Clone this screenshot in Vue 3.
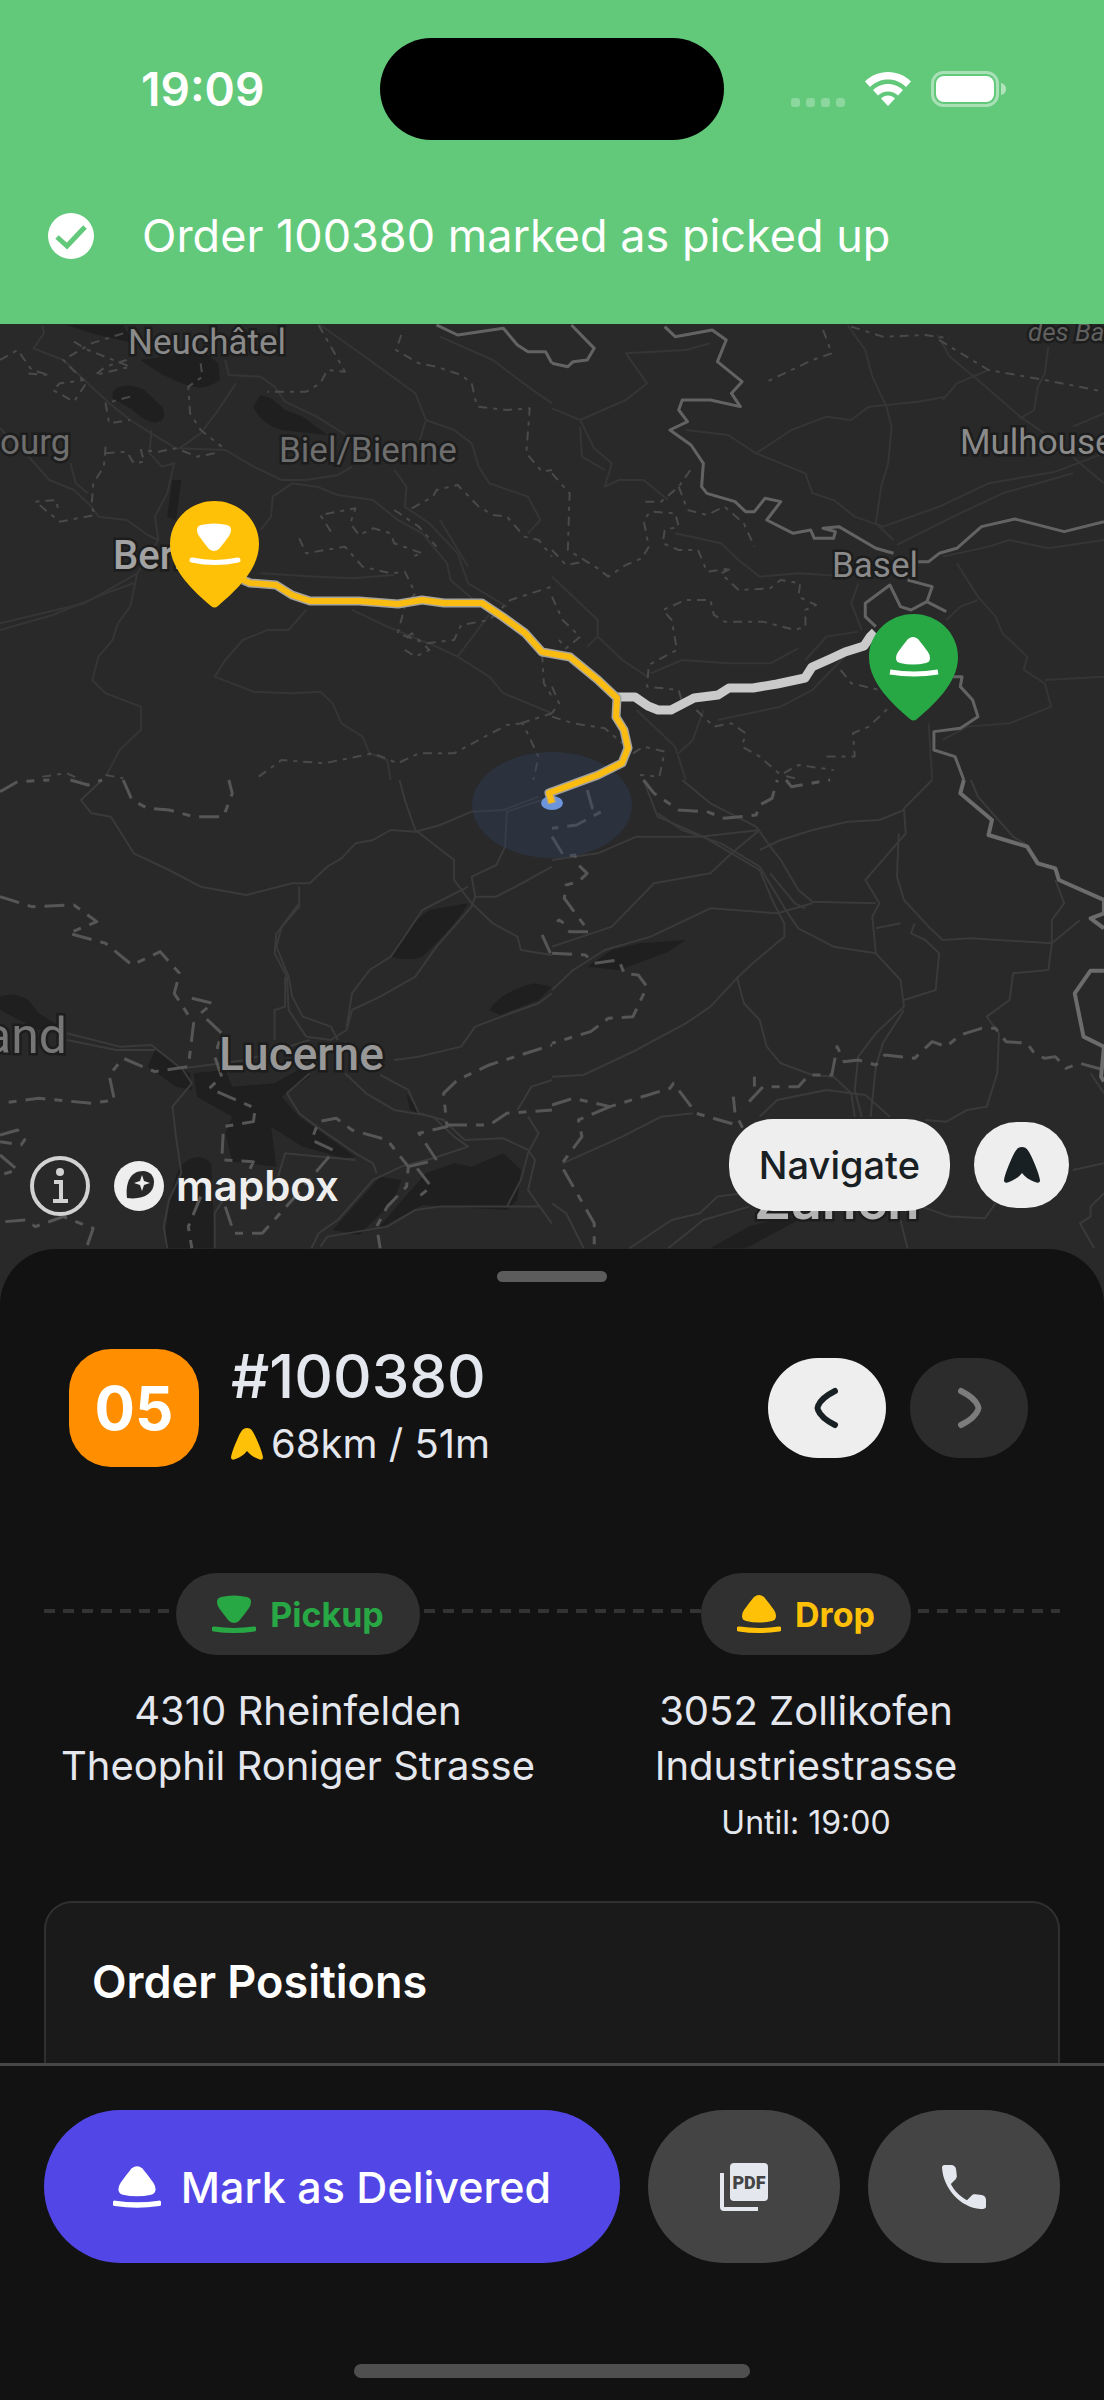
<template>
  <div class="page">
    <!-- status bar + toast -->
    <header class="top">
      <div class="status-bar">
        <span class="clock">19:09</span>
        <div class="island"></div>
        <div class="status-icons">
          <div class="signal">
            <i v-for="n in 4" :key="n"></i>
          </div>
          <svg class="wifi" viewBox="0 0 46 34">
            <path d="M23 0C14 0 6 3.500 0 9.500L5 15C10 10 16 7.500 23 7.500S36 10 41 15L46 9.500C40 3.500 32 0 23 0Z" />
            <path d="M23 12C17 12 12 14.500 8 18L13 23.500C16 21 19 19.500 23 19.500S30 21 33 23.500L38 18C34 14.500 29 12 23 12Z" />
            <path d="M23 23.500C20.500 23.500 18 24.500 16 26.500L23 34L30 26.500C28 24.500 25.500 23.500 23 23.500Z" />
          </svg>
          <svg class="battery" viewBox="0 0 75 36">
            <rect x="1.500" y="1.500" width="65" height="33" rx="11" fill="none" stroke="#fff" stroke-opacity=".45" stroke-width="3" />
            <rect x="5" y="5" width="58" height="26" rx="8" fill="#fff" />
            <path d="M70 12C74 13 75 16 75 18S74 23 70 24Z" fill="#fff" fill-opacity=".5" />
          </svg>
        </div>
      </div>
      <div class="toast" role="status">
        <svg class="toast-icon" viewBox="0 0 46 46">
          <circle cx="23" cy="23" r="23" fill="#fff" />
          <path d="M9 24L19 33L37 14" fill="none" stroke="#62c97b" stroke-width="5" />
        </svg>
        <span>Order 100380 marked as picked up</span>
      </div>
    </header>

    <!-- map -->
    <section class="map">
      <svg class="map-canvas" viewBox="0 324 1104 981" preserveAspectRatio="xMidYMin slice">
        <g v-for="tile in tiles" :key="tile.id" :class="{ near: tile.y > 700 }" :transform="`translate(${tile.x} ${tile.y}) scale(.352 .3333)`">
          <path v-for="(d, i) in tile.water" :key="'w' + i" class="water" :d="d" />
          <path v-for="(d, i) in tile.roads" :key="'r' + i" class="road" :d="d" />
          <path v-for="(d, i) in tile.cantons" :key="'c' + i" class="canton" :d="d" />
          <path v-for="(d, i) in tile.borders" :key="'b' + i" class="border" :d="d" />
        </g>

        <g class="labels">
          <text v-for="label in labels" :key="label.text" :x="label.x" :y="label.y" :class="label.kind">{{ label.text }}</text>
        </g>

        <ellipse cx="552" cy="805" rx="80" ry="53" fill="#2e4364" fill-opacity=".36" />
        <ellipse cx="552" cy="803" rx="11" ry="7" fill="#6d95dc" />

        <path class="route-alt" :d="pickupRoute" />
        <path class="route-casing" :d="dropRoute" />
        <path class="route" :d="dropRoute" />

        <g transform="translate(170 501)">
          <path :d="pinShape" fill="#ffc107" />
          <g transform="translate(21 21)" fill="#fff" stroke="#fff">
            <path :d="cone" transform="translate(1 1)" stroke="none" />
            <path d="M1 38Q24 43 47 38" fill="none" stroke-width="5" stroke-linecap="round" />
          </g>
        </g>
        <g transform="translate(869 614)">
          <path :d="pinShape" fill="#28a745" />
          <g transform="translate(21 21)" fill="#fff" stroke="#fff">
            <path :d="cone" transform="translate(1 2) rotate(180 22 14)" stroke="none" />
            <path d="M0 37Q24 41 48 37" fill="none" stroke-width="5" />
          </g>
        </g>
      </svg>

      <div class="map-controls">
        <a class="info" href="#" aria-label="Map info">
          <svg viewBox="0 0 60 60" fill="none" stroke="#d2d2d2" stroke-width="4">
            <circle cx="30" cy="30" r="28" />
            <circle cx="30" cy="16" r="4" fill="#d2d2d2" stroke="none" />
            <path d="M24 26H31V45M23 45H38" />
          </svg>
        </a>
        <a class="mapbox" href="#">
          <svg viewBox="0 0 50 50">
            <circle cx="25" cy="25" r="25" fill="#eee" />
            <path d="M13 37C11 21 17 10 29 10C36 10 40 15 40 21C40 33 29 39 13 37Z" fill="#282828" />
            <path d="M28 14L30 20L36 22L30 24L28 30L26 24L20 22L26 20Z" fill="#eee" />
          </svg>
          mapbox
        </a>
        <button class="navigate">Navigate</button>
        <button class="locate" aria-label="Recenter">
          <svg viewBox="0 0 36 36"><path :d="arrow" fill="#182023" /></svg>
        </button>
      </div>
    </section>

    <!-- order sheet -->
    <main class="sheet">
      <div class="handle"></div>

      <div class="order-head">
        <div class="stop-number">05</div>
        <div class="order-info">
          <h1>#100380</h1>
          <p>
            <svg viewBox="0 0 36 36"><path :d="arrow" fill="#ffc107" /></svg>
            68km / 51m
          </p>
        </div>
        <div class="pager">
          <button class="pager-btn" aria-label="Previous order">
            <svg viewBox="0 0 28 44"><path d="M22 5Q8 12 5 20Q4 22 5 24Q8 32 22 39" /></svg>
          </button>
          <button class="pager-btn" aria-label="Next order" disabled>
            <svg viewBox="0 0 28 44"><path d="M6 5Q20 12 23 20Q24 22 23 24Q20 32 6 39" /></svg>
          </button>
        </div>
      </div>

      <div class="stops">
        <div v-for="stop in stops" :key="stop.type" class="stop">
          <div class="pill" :class="stop.type">
            <svg viewBox="0 0 44 38">
              <path :d="cone" :transform="stop.type === 'drop' ? 'rotate(180 22 14)' : null" />
              <path class="brim" d="M2 34Q22 37 42 34" />
            </svg>
            {{ stop.label }}
          </div>
          <address>
            {{ stop.city }}<br />
            {{ stop.street }}
          </address>
          <p v-if="stop.until" class="until">Until: {{ stop.until }}</p>
        </div>
      </div>

      <div class="positions">
        <h2>Order Positions</h2>
      </div>
    </main>

    <!-- actions -->
    <footer class="actions">
      <div class="action-row">
        <button class="deliver">
          <svg viewBox="0 0 44 38">
            <path :d="cone" transform="rotate(180 22 14)" />
            <path class="brim" d="M2 34Q22 37 42 34" />
          </svg>
          Mark as Delivered
        </button>
        <button class="round" aria-label="Open PDF">
          <svg viewBox="0 0 48 48">
            <path d="M0 10H4V44H38V48H4Q0 48 0 44Z" fill="#e5e7ee" />
            <rect x="10" width="38" height="38" rx="4" fill="#e5e7ee" />
            <text x="29" y="26" text-anchor="middle">PDF</text>
          </svg>
        </button>
        <button class="round" aria-label="Call">
          <svg class="phone" viewBox="3 3 18 18">
            <path d="M19.230 15.260l-2.540-.290c-.610-.070-1.210.140-1.640.570l-1.840 1.840c-2.830-1.440-5.150-3.750-6.590-6.590l1.850-1.850c.430-.430.640-1.030.570-1.640l-.290-2.520c-.120-1.010-.970-1.770-1.990-1.770H4c-.600 0-1 .400-1 1 .500 8.500 7.500 16.500 16 17 .600 0 2 .100 2-1v-2.760c.010-1.010-.760-1.860-1.770-1.990z" fill="#e5e7ee" />
          </svg>
        </button>
      </div>
      <div class="home-bar"></div>
    </footer>
  </div>
</template>

<script setup>
const stops = [
  { type: 'pickup', label: 'Pickup', city: '4310 Rheinfelden', street: 'Theophil Roniger Strasse' },
  { type: 'drop', label: 'Drop', city: '3052 Zollikofen', street: 'Industriestrasse', until: '19:00' }
]

const cone = 'M5 7Q5 3 9 2Q22 -1 35 2Q39 3 39 7Q39 10 37 13Q32 20 27 26Q22 30 17 26Q12 20 7 13Q5 10 5 7Z'
const arrow = 'M18 0C23 0 25 4 29 13C33 22 35 28 36 33Q36 37 31 35C26 33 22 31 18 26C14 31 10 33 5 35Q0 37 0 33C1 28 3 22 7 13C11 4 13 0 18 0Z'
const pinShape = 'M44.500 0C69 0 89 19 89 43C89 70 63 92 48 105Q44.500 108 41 105C26 92 0 70 0 43C0 19 20 0 44.500 0Z'

const dropRoute = 'M243 580L250 583L276 585L292 595L310 601H359L398 604L422 600L444 603H482L503 617L525 633L542 652L570 657L598 680L617 698L616 717L624 730L628 748L622 763L598 775L549 793L552 803'
const pickupRoute = 'M875 632L870 637L864 646L845 652L830 659L812 667L805 678L777 684L753 688H729L718 695L694 698L671 710H658L648 706L635 697H617'

const labels = [
  { text: 'Neuchâtel', x: 128, y: 354, kind: 'town' },
  { text: 'Biel/Bienne', x: 279, y: 462, kind: 'town dim' },
  { text: 'ourg', x: 0, y: 454, kind: 'town dim' },
  { text: 'Bern', x: 113, y: 569, kind: 'city' },
  { text: 'Mulhouse', x: 960, y: 454, kind: 'town' },
  { text: 'Basel', x: 832, y: 577, kind: 'town' },
  { text: 'des Bal', x: 1028, y: 341, kind: 'park' },
  { text: 'and', x: -16, y: 1053, kind: 'region' },
  { text: 'Lucerne', x: 219, y: 1070, kind: 'big' },
  { text: 'Zürich', x: 755, y: 1219, kind: 'capital' }
]

const tiles = [
  {
    id: 'nw', x: 0, y: 320,
    water: [
      'M190 15L260 40L380 70L350 15Z',
      'M400 120Q480 110 560 80L620 130L625 180Q580 215 530 195Q460 170 400 120Z',
      'M320 215Q350 180 410 210L460 260Q480 300 440 308Q410 305 370 265L320 235Z',
      'M740 225L720 260Q740 310 800 330L930 345L860 290L810 270L770 235Z',
      'M490 480L515 480L500 600L475 590Z'
    ],
    roads: [
      'M120 15L125 40L95 85L180 120L240 180L310 250L370 300L430 340L500 385L640 390L720 440L800 480H870L960 465L1000 440',
      'M640 120L650 165L740 170L780 200L810 245L900 290L990 350',
      'M430 330L425 400L460 440L495 430L475 520L440 590L450 660L390 760L240 850L0 910',
      'M670 190L620 270L570 340L510 385', 'M0 325L90 420L140 480L210 510L260 560L280 590L360 600L420 645L450 660',
      'M200 430L215 490L250 520', 'M0 930L150 885L300 820L380 790', 'M390 760L370 860L335 910L320 960L280 1010L262 1080L300 1120L400 1160L400 1230L340 1290L300 1370',
      'M870 870L820 930L760 930L690 960L640 1020L610 1070L720 1115L830 1120L910 1115L945 1150L970 1210L1030 1250L1050 1300L1100 1320L1110 1380',
      'M740 630L770 590L775 530L830 490L900 500L960 525L1060 540L1130 600L1200 640L1270 730L1280 780L1340 835L1400 870L1300 1010L1240 980L1100 920L1000 870',
      'M910 15L1050 120L1180 220L1210 300L1190 370', 'M1210 300L1290 330L1340 370L1360 440L1390 490L1500 530L1535 600L1500 640',
      'M1120 450L1155 500L1150 560L1220 610L1300 700L1330 790L1440 860', 'M1250 600L1330 740', 'M740 760L900 770L1000 775L1120 765', 'M1250 50L1400 120L1500 200L1568 250',
      'M1300 1010L1390 1070L1430 1120L1568 1180'
    ],
    cantons: [
      'M350 40L260 70L180 120L245 190L210 245L150 210L170 190L240 180', 'M210 65L250 90L370 140L270 165L300 140L360 120', 'M0 120L50 90L90 150L140 165L70 160',
      'M370 230L300 250L310 310L370 300', 'M570 130L575 170L535 200L540 280L570 330L630 380', 'M300 380L295 440L265 490L260 560L270 585L170 605L100 545L160 540L165 570',
      'M300 400L360 395L380 430L410 425L400 390L450 395L500 385L560 410L610 400', 'M905 15L940 80L980 155L930 150L910 190L870 215L760 215',
      'M1140 45L1125 90L1190 130L1240 140L1310 165L1340 190L1355 260L1440 270L1505 265L1495 400L1540 455L1568 450',
      'M1170 565L1230 530L1240 510L1300 495L1360 560L1400 585L1440 590L1490 650L1530 660L1568 710',
      'M940 635L910 585L1010 565L995 610L1020 645L1060 625L1110 640L1120 670L1200 700L1170 710', 'M850 655L870 700L980 680L1030 740L1110 760L1150 755L1180 820L1150 860L1130 940L1210 970L1290 960L1310 915L1390 900L1450 840L1568 800',
      'M1150 990L1180 1010L1220 990L1170 940L1150 960', 'M1120 570L1190 620L1240 680', 'M735 1370L800 1320L920 1330L1060 1300L1130 1330L1190 1300L1290 1300L1360 1260L1440 1215L1485 1210L1530 1310L1515 1380', 'M120 1370L190 1360L230 1380', 'M1480 1210L1568 1180', 'M1540 1000L1545 1090L1568 1130', 'M300 1365L350 1375'
    ],
    borders: ['M1240 15L1300 45L1430 25L1470 75L1500 95L1550 95L1568 130']
  },
  {
    id: 'ne', x: 552, y: 320,
    water: [],
    roads: [
      'M840 15L890 90L910 170L950 260L965 320L955 430L935 500L920 610L970 660', 'M1095 45L1130 110L1210 180L1330 290L1440 370L1500 430L1568 490', 'M1410 80L1400 160L1380 200L1370 270L1330 295',
      'M1110 240L1150 190L1240 150', 'M380 330L500 345L580 400L720 460L740 520L800 540L860 590L940 620L1100 560L1240 490L1430 455L1568 400',
      'M980 675L1140 590L1280 520L1480 460', 'M580 400L680 330L780 290L850 300L900 260L1040 245L1120 230', 'M0 770L130 900V950L100 980', 'M80 300L120 385L170 430L150 500L190 480L260 480L330 540',
      'M0 265L80 300L210 240L270 190L210 100L380 90L450 70', 'M80 320L85 410L150 450', 'M350 640L480 670L530 720L590 770L700 760L850 770', 'M870 790L850 850L880 930', 'M1150 730L1210 830L1260 890L1280 940L1350 1010L1340 1050L1400 1090L1418 1160L1300 1210L1180 1220L1110 1260',
      'M1110 710L1240 680L1300 660L1410 685L1568 660', 'M1120 900L1160 860L1210 840', 'M720 1020L780 950L870 935', 'M280 1060L370 1020L500 1030L620 1030L700 985',
      'M240 1170L350 1280L380 1380', 'M130 950L200 1020L270 1070', 'M650 1160L740 1110L840 1000', 'M430 1170L400 1260L360 1300', 'M470 1200L650 1160', 'M1070 1210L1080 1380', 'M1400 1080L1568 1070', 'M1480 320L1568 280'
    ],
    cantons: [
      'M0 460L50 520L45 690L130 745L160 770L210 735L255 715L275 680L260 600L280 575L350 580L360 620L320 630L315 670L360 690L415 690L440 755L510 745L480 760L530 810L620 805L650 780L705 790L700 830L750 855L720 870L720 920L690 930L600 905L490 905L460 885L450 840L380 840L315 870L340 900L355 990L275 1035L270 1100L360 1110L370 1150',
      'M0 830L30 900L80 950L40 985L20 960', 'M265 545L310 545L360 500L400 440', 'M360 500L385 570L440 585L490 560L545 610L575 680', 'M0 690L40 735L90 725', 'M770 30L795 100L740 120L660 160L600 190', 'M850 20L940 50L1060 45L1130 55',
      'M410 1170L460 1220L510 1210L550 1240L540 1280L590 1310L650 1365L700 1335L800 1350', 'M690 1375L650 1365', 'M780 1310H860L855 1240L900 1220L960 1160', 'M820 1050L850 1090L930 1110', 'M0 1100L20 1150L0 1180M0 1190L60 1210L150 1225L200 1270', 'M230 1300L260 1280L320 1295L305 1370L250 1365', 'M1100 60L1240 150L1400 180L1568 215'
    ],
    borders: [
      'M55 15L120 85L100 120L60 125L45 140L0 130', 'M320 20L350 50L455 30L495 60L470 125L540 185L510 220L535 260L450 240H370L360 270L385 305L335 330L395 375L430 430L425 500L440 520L520 545L550 575L575 575L605 535L650 545L610 600L685 640L735 630L745 655H800L805 635L770 625L815 620L920 685L970 700',
      'M1040 725H1070L1100 700L1150 685L1220 620L1315 597L1455 635L1568 605', 'M920 920L890 890V850L960 795L990 860L1020 870L1065 845L1080 800L1010 780', 'M1065 845L1120 875', 'M1140 1070H1165L1160 1100L1195 1140L1210 1190L1160 1225L1085 1235V1290L1145 1310L1170 1380'
    ]
  },
  {
    id: 'sw', x: 0, y: 780,
    water: [
      'M0 650Q40 635 80 660L110 700L170 740L110 750L0 690Z', 'M440 810L540 880L545 930L500 920L420 860Z', 'M550 880L640 870L660 920L780 910L880 850L880 890L800 950L850 1010L1010 1130L980 1135L860 1100L770 1040L785 1160L660 1145L640 1060L660 1010L560 950Z',
      'M1110 530Q1150 440 1220 390L1330 370Q1300 430 1200 530Q1160 545 1110 530Z', 'M1390 690Q1430 630 1520 610L1568 620L1530 660L1420 705Z', 'M510 1160Q560 1110 600 1150L610 1405H470Q470 1270 510 1160Z', 'M945 1350L1080 1190L1140 1200L1120 1260L1020 1365Z', 'M1160 1240L1210 1180L1290 1150L1340 1160L1430 1120L1480 1170L1470 1260L1440 1290L1200 1275L1070 1350Z', 'M1155 940L1190 1000L1165 990Z'
    ],
    roads: [
      'M290 0L230 60L260 100L315 110L380 220L480 270L570 320L700 345L830 310H880L930 260L970 235L1010 190L1060 180L1110 150L1180 155L1250 135L1340 95L1430 90L1530 50',
      'M1135 0L1150 60L1180 150L1290 240V300L1340 370', 'M1540 60L1440 95L1435 200L1410 255L1340 290L1350 350L1340 380L1240 500L1180 590L1080 650L1000 690L985 750L940 780L870 770L820 690L815 590L780 520L785 460L850 380V320',
      'M1350 350H1410L1500 300L1568 260', 'M1340 370L1400 430L1470 470L1480 510L1568 525', 'M1330 320L1200 390L1110 530L1050 570L1000 640L985 740', 'M850 370L800 440L785 500L820 590L830 650L860 710L940 740L960 780', 'M780 780V690L810 680V590',
      'M190 760L340 800L430 795L520 870L545 910L490 980L500 1070L515 1180L480 1260L465 1340L475 1405', 'M190 780L330 810L440 810', 'M520 865L700 840L880 780', 'M880 880L815 940L850 1000L900 1040L1010 1120L1060 1150L1070 1180', 'M980 880L1040 940L1120 990L1230 1010L1290 1070L1330 1100L1230 1135L1140 1160L1060 1200L960 1320L905 1360L885 1405', 'M1080 885L1160 930L1190 1000L1260 1020L1320 1080L1430 1075L1500 1110L1520 1140L1500 1230L1520 1260L1568 1330', 'M1120 840L1190 830L1310 800L1350 740L1450 700L1530 670L1568 640', 'M1500 1010L1530 1060L1500 1120L1480 1200L1440 1280H1250L1180 1290L1100 1340L930 1370L910 1400', 'M1470 990L1510 920L1568 900', 'M790 1190L810 1120L860 1125L1010 1140', 'M610 1405V1300L640 1250', 'M1440 1280H1530'
    ],
    cantons: [
      'M0 35L50 5L140 0M200 0L250 15L290 0M350 0L375 60L420 85L480 90L550 110H635L660 40L650 0', 'M0 350L90 380L210 375L275 425L195 460L300 490L375 555L455 515L510 580L495 640L550 730L535 860L440 875L350 835L310 885L325 960L260 970L110 955L0 970',
      'M545 655L605 670L570 700L630 760L610 830L630 890L595 925L725 985L720 1025L635 1040L630 1140L720 1145L700 1190', 'M945 1110L885 1080L905 1025L955 1015L1000 1050L1100 1080L1160 1160L1155 1220L1100 1280L1070 1340L1080 1405', 'M1160 1160L1220 1145M1185 1165L1225 1220L1190 1250', 'M1240 1140L1190 1060L1270 1040L1260 940L1300 900L1390 855L1568 795', 'M1270 1035H1390L1440 1000L1568 990', 'M0 1065L50 1050L70 1080L60 1095L0 1085M0 1125L50 1170L0 1185', 'M15 1325L75 1320L100 1340L180 1310L240 1335L265 1345L245 1405', 'M570 1250L535 1340L545 1405', 'M640 1280L665 1360H745L830 1260L935 1130', 'M1540 465L1568 530'
    ],
    borders: []
  },
  {
    id: 'se', x: 552, y: 780,
    water: ['M100 560L170 510L250 490L380 480L330 515L190 570Z', 'M450 1405L560 1340L660 1310L700 1320L550 1405Z'],
    roads: [
      'M260 0L300 110L430 170L510 220L590 270L630 370L660 430V470L570 550L525 595L450 680L380 730L240 810L90 885L0 890', 'M370 0L450 70L580 140L620 200L650 240L700 330L740 365L920 370', 'M300 100L370 150L480 190L590 260L670 400L700 445L800 500L920 520L990 600L1000 680L920 760L870 830L860 930L880 1010', 'M1080 0L1000 85L1005 160L890 300L930 370L910 410L920 520', 'M985 160L980 290L1000 360L1070 440L1110 480L1190 475L1420 490L1500 420', 'M1000 90L930 120L840 125L740 150L650 180L590 210', 'M590 150L510 220L450 280L290 310L170 440L0 500', 'M0 240L130 220L240 170L420 170L590 150', 'M0 630L60 570L150 510L280 470L450 385L640 400L740 370', 'M525 590L545 670L590 720L610 800L650 850L740 885L800 890L850 940L860 1010', 'M1000 660L1090 630L1100 520L1060 480L1020 460L1030 430', 'M1190 0L1210 50L1310 170L1350 195', 'M1430 300L1455 370L1420 420V490L1410 570L1310 580L1300 660L1235 710L1270 760L1265 880L1235 980L1180 990L1120 1025L1060 1020', 'M590 1010L640 960L780 930L890 945L960 1010', 'M30 1150L200 1070L310 1010L400 1000', 'M0 1270L40 1300L90 1405', 'M220 1405L340 1320L420 1300L470 1250L540 1240', 'M330 1405L430 1320L560 1280', 'M990 1320L1010 1405', 'M1050 1280L1130 1310L1230 1315L1260 1270', 'M1568 1240L1530 1280V1310L1500 1330L1540 1405', 'M1480 1170L1568 1150', 'M1000 690L940 790L920 860L905 1010', 'M620 280L690 370L720 385', 'M920 445L990 430', 'M1530 880L1568 940'
    ],
    cantons: [
      'M260 0L290 40L360 90L440 95L490 115L580 105L590 75L625 55L640 0M665 0L680 20L790 0', 'M100 30L115 85L140 95L70 135L0 145M0 170L35 230L65 225L70 250L100 280L75 305L40 315L35 355L105 455H50L35 430L20 420L0 440', 'M0 520L95 525L120 550L190 540L205 580L245 585L270 620L230 710L160 715L110 755L0 790', 'M0 975L60 955L165 980L335 925L345 910L410 1000L540 1040L520 1000L515 950M560 965L600 920H700L730 885H795L810 800L830 845L870 840L920 855L945 825L1030 835L1080 785L1120 800L1160 765L1220 745H1260L1290 785L1350 790L1370 820L1400 835L1430 830L1460 865L1500 850L1568 870', 'M165 980L75 1020L85 1070L25 1155L120 1330V1405', 'M575 890V920'
    ],
    borders: ['M1170 0L1160 40L1250 120L1240 165L1350 200L1380 250L1430 265L1440 300L1568 360V400L1530 415L1568 445', 'M1568 572H1530L1485 640L1510 770L1568 800L1560 890L1568 905']
  }
]
</script>

<style>
body {
  margin: 0;
  background: #121212;
}
</style>

<style scoped>
.page {
  display: flex;
  flex-direction: column;
  min-height: 100vh;
  background: #121212;
  color: #e5e7ee;
  font-family: Inter, Roboto, sans-serif;
}
h1, h2, p {
  margin: 0;
}
button {
  display: flex;
  align-items: center;
  justify-content: center;
  padding: 0;
  border: none;
  font-family: inherit;
  cursor: pointer;
}
svg {
  display: block;
  flex-shrink: 0;
}

.top {
  background: #62c97b;
  color: #fff;
}
.status-bar {
  display: grid;
  grid-template-columns: 1fr auto 1fr;
  align-items: center;
  height: 178px;
}
.clock {
  padding-left: 141px;
  font-size: 46px;
  font-weight: 600;
}
.island {
  width: 344px;
  height: 102px;
  border-radius: 52px;
  background: #000;
}
.status-icons {
  display: flex;
  align-items: center;
  justify-content: flex-end;
  gap: 20px;
  padding-right: 98px;
}
.signal {
  display: flex;
  align-self: flex-end;
  gap: 6px;
}
.signal i {
  width: 9px;
  height: 9px;
  border-radius: 3px;
  background: rgba(255, 255, 255, 0.27);
}
.wifi {
  width: 46px;
  height: 34px;
  fill: #fff;
}
.battery {
  width: 75px;
  height: 36px;
}
.toast {
  display: flex;
  align-items: center;
  gap: 48px;
  padding: 28px 48px 58px;
  font-size: 45px;
  line-height: 60px;
}
.toast-icon {
  width: 46px;
  height: 46px;
}

.map {
  position: relative;
  overflow: hidden;
  background: #292929;
}
.map-canvas {
  width: 100%;
}
.water {
  fill: #1f1f1f;
}
.road,
.canton,
.border,
.route,
.route-casing,
.route-alt {
  fill: none;
  stroke-linejoin: round;
  vector-effect: non-scaling-stroke;
}
.road {
  stroke: #353535;
  stroke-width: 2;
}
.canton {
  stroke: #4a4a4a;
  stroke-width: 2;
  stroke-dasharray: 9 6 4 6;
}
.border {
  stroke: #636363;
  stroke-width: 3;
}
.near .road {
  stroke: #3a3a3a;
}
.near .canton {
  stroke: #565656;
  stroke-width: 3;
  stroke-dasharray: 20 9 8 9;
}
.near .border {
  stroke: #6c6c6c;
  stroke-width: 4;
}
.route-alt {
  stroke: #cacaca;
  stroke-width: 9;
}
.route-casing {
  stroke: #a5a39c;
  stroke-width: 9;
}
.route {
  stroke: #fbbc12;
  stroke-width: 6;
}
.labels {
  font-family: Roboto, sans-serif;
  paint-order: stroke;
  stroke: #1d1d1d;
  stroke-width: 5px;
  fill: #8a8a8a;
}
.town {
  font-size: 35px;
}
.dim {
  fill: #6e6e6e;
}
.city {
  font-size: 40px;
  font-weight: 500;
  fill: #a2a2a2;
}
.park {
  font-size: 26px;
  font-style: italic;
  fill: #606060;
}
.region {
  font-size: 50px;
  fill: #767676;
}
.big {
  font-size: 46px;
  font-weight: 500;
  fill: #989898;
}
.capital {
  font-size: 58px;
  font-weight: 500;
  fill: #b4b4b4;
}
.map-controls {
  position: absolute;
  right: 35px;
  bottom: 89px;
  left: 30px;
  display: flex;
  align-items: center;
}
.info,
.mapbox {
  margin-top: 42px;
}
.info svg {
  width: 60px;
  height: 60px;
}
.mapbox {
  display: flex;
  align-items: center;
  gap: 12px;
  margin-left: 24px;
  color: #eee;
  font-size: 42px;
  font-weight: 600;
  line-height: 50px;
  text-decoration: none;
}
.mapbox svg {
  width: 50px;
  height: 50px;
}
.navigate {
  margin-left: auto;
  padding: 0 30px;
  height: 92px;
  border-radius: 44px;
  background: #eee;
  color: #182023;
  font-size: 38px;
  font-weight: 500;
}
.locate {
  width: 95px;
  height: 86px;
  margin-left: 24px;
  border-radius: 43px;
  background: #eee;
}
.locate svg {
  width: 36px;
  height: 36px;
}

.sheet {
  position: relative;
  margin-top: -56px;
  padding: 22px 44px 0;
  border-radius: 56px 56px 0 0;
  background: #121212;
}
.handle {
  width: 110px;
  height: 11px;
  margin: 0 auto;
  border-radius: 6px;
  background: #5c5c5c;
}
.order-head {
  display: flex;
  align-items: center;
  padding: 58px 32px 0 25px;
}
.stop-number {
  display: flex;
  align-items: center;
  justify-content: center;
  width: 130px;
  height: 118px;
  border-radius: 42px;
  background: #ff8f00;
  color: #fff;
  font-size: 60px;
  font-weight: 700;
}
.order-info {
  margin-left: 32px;
}
.order-info h1 {
  font-size: 60px;
  font-weight: 500;
  line-height: 72px;
}
.order-info p {
  display: flex;
  align-items: center;
  gap: 8px;
  font-size: 40px;
  line-height: 64px;
}
.order-info svg {
  width: 32px;
  height: 32px;
}
.pager {
  display: flex;
  gap: 24px;
  margin-left: auto;
}
.pager-btn {
  width: 118px;
  height: 100px;
  border-radius: 50px;
  background: #eee;
  color: #182023;
}
.pager-btn:disabled {
  background: #2c2c2c;
  color: #7c7c7c;
  cursor: default;
}
.pager-btn svg {
  width: 28px;
  height: 44px;
  fill: none;
  stroke: currentColor;
  stroke-width: 6;
  stroke-linecap: round;
}

.stops {
  display: flex;
  margin-top: 97px;
  min-height: 328px;
  background: repeating-linear-gradient(90deg, #333 0 11px, transparent 11px 19px) 0 36px / 100% 4px no-repeat;
}
.stop {
  display: flex;
  flex: 1;
  flex-direction: column;
  align-items: center;
  text-align: center;
}
.pill {
  display: flex;
  align-items: center;
  gap: 14px;
  height: 82px;
  padding: 0 36px;
  border-radius: 41px;
  background: #303030;
  font-size: 34px;
  font-weight: 700;
}
.pill svg {
  width: 44px;
  height: 38px;
  fill: currentColor;
}
.brim {
  fill: none;
  stroke: currentColor;
  stroke-width: 5;
  stroke-linecap: round;
}
.pickup {
  color: #28a745;
}
.drop {
  color: #ffc107;
}
.stop address {
  margin-top: 28px;
  font-size: 40px;
  font-style: normal;
  line-height: 55px;
}
.until {
  font-size: 32px;
  line-height: 60px;
}

.positions {
  padding: 47px 46px 49px;
  border: 2px solid #303030;
  border-bottom: none;
  border-radius: 28px 28px 0 0;
  background: #1a1a1a;
}
.positions h2 {
  color: #fff;
  font-size: 45px;
  font-weight: 600;
  line-height: 64px;
}

.actions {
  display: flex;
  flex: 1;
  flex-direction: column;
  border-top: 3px solid #474747;
  padding: 44px 44px 22px;
}
.action-row {
  display: flex;
  gap: 28px;
}
.action-row button {
  height: 153px;
  border-radius: 77px;
}
.deliver {
  flex: 3;
  gap: 20px;
  background: #5247e6;
  color: #fff;
  font-size: 43px;
  font-weight: 500;
}
.deliver svg {
  width: 48px;
  height: 42px;
  fill: currentColor;
}
.round {
  flex: 1;
  background: #444;
}
.round svg {
  width: 48px;
  height: 48px;
}
.round .phone {
  width: 44px;
  height: 44px;
}
.round text {
  font-family: Roboto, sans-serif;
  font-size: 18px;
  font-weight: 900;
  fill: #444;
}
.home-bar {
  width: 396px;
  height: 14px;
  margin: auto auto 0;
  border-radius: 7px;
  background: #4f4f4f;
}
</style>
